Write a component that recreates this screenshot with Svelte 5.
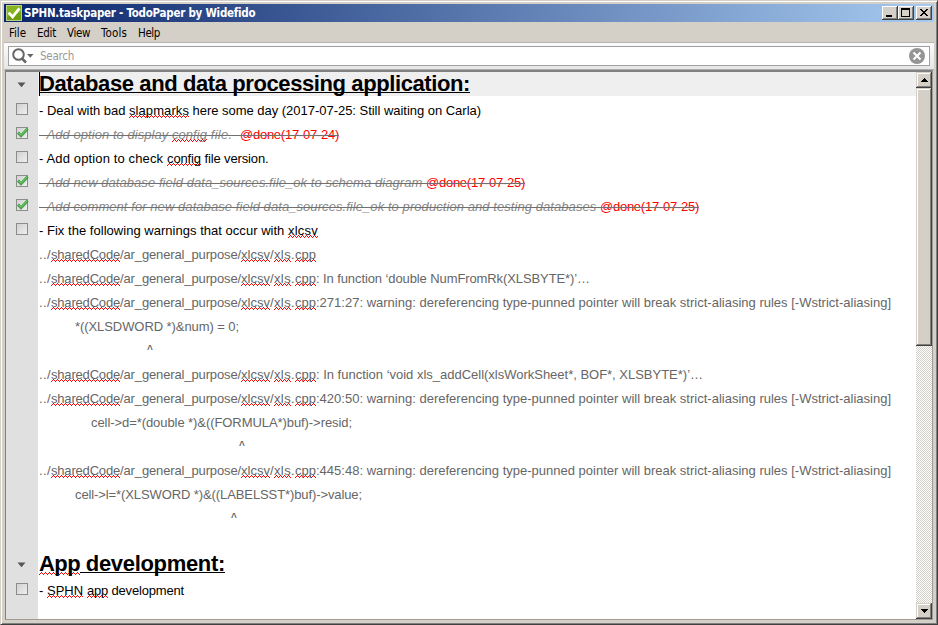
<script>
  // Spreads letter spacing so that a run of text takes exactly the given width.
  function fit(node, width) {
    const natural = node.getBoundingClientRect().width;
    const count = Array.from(node.textContent).length;
    if (width && count) node.style.letterSpacing = `${(width - natural) / count}px`;
  }

  const menus = [
    { label: 'File', width: 17, gap: 11 },
    { label: 'Edit', width: 19, gap: 11 },
    { label: 'View', width: 23, gap: 11 },
    { label: 'Tools', width: 26, gap: 11 },
    { label: 'Help', width: 22, gap: 0 },
  ];

  // "~" surrounds words flagged by the spell checker; widths has one entry per part.
  const path = '../~sharedCode~/ar_general_purpose/~xlcsv~/~xls~.~cpp~';
  const pathWidths = [12, 69, 121, 29, 4, 17, 4, 21];
  const rows = [
    { kind: 'heading', text: 'Database and data processing application:', widths: [431], active: true },
    { kind: 'task', text: '- Deal with bad ~slapmarks~ here some day (2017-07-25: Still waiting on Carla)', widths: [90, 60, 292] },
    { kind: 'task', done: true, text: '- Add option to display ~config~ file.  ', widths: [133, 35, 33], tag: '@done(17-07-24)' },
    { kind: 'task', text: '- Add option to check ~config~ file version.', widths: [128, 34, 67.5] },
    { kind: 'task', done: true, text: '- Add new database field data_sources.file_ok to schema diagram ', widths: [387], tag: '@done(17-07-25)' },
    { kind: 'task', done: true, text: '- Add comment for new database field data_sources.file_ok to production and testing databases ', widths: [561], tag: '@done(17-07-25)' },
    { kind: 'task', text: '- Fix the following warnings that occur with ~xlcsv~', widths: [249, 30] },
    { kind: 'note', text: path, widths: pathWidths },
    { kind: 'note', text: path + ': In function ‘double NumFromRk(XLSBYTE*)’…', widths: [...pathWidths, 274] },
    { kind: 'note', text: path + ':271:27: warning: dereferencing type-punned pointer will break strict-aliasing rules [-Wstrict-aliasing]', widths: [...pathWidths, 575] },
    { kind: 'note', text: '*((XLSDWORD *)&num) = 0;', widths: [164], indent: 36 },
    { kind: 'note', text: '^', indent: 108, caret: true },
    { kind: 'note', text: path + ': In function ‘void xls_addCell(xlsWorkSheet*, BOF*, XLSBYTE*)’…', widths: [...pathWidths, 387] },
    { kind: 'note', text: path + ':420:50: warning: dereferencing type-punned pointer will break strict-aliasing rules [-Wstrict-aliasing]', widths: [...pathWidths, 575] },
    { kind: 'note', text: 'cell->d=*(double *)&((FORMULA*)buf)->resid;', widths: [261], indent: 52 },
    { kind: 'note', text: '^', indent: 200, caret: true },
    { kind: 'note', text: path + ':445:48: warning: dereferencing type-punned pointer will break strict-aliasing rules [-Wstrict-aliasing]', widths: [...pathWidths, 575] },
    { kind: 'note', text: 'cell->l=*(XLSWORD *)&((LABELSST*)buf)->value;', widths: [287], indent: 36 },
    { kind: 'note', text: '^', indent: 192, caret: true },
    { kind: 'blank', text: '' },
    { kind: 'heading', text: '~App~ development:', widths: [0, 41, 145] },
    { kind: 'task', text: '- ~SPHN~ ~app~ development', widths: [8, 36, 4, 21, 76] },
  ];
  const parts = (text) => text.split('~');
</script>

<div class="window">
  <header class="titlebar">
    <svg class="logo" width="16" height="16" viewBox="0 0 16 16">
      <rect width="16" height="16" fill="#b9cf8a" />
      <rect x="1" y="1" width="14" height="14" fill="#6f9f0c" />
      <path d="M1 1h14v6L1 12z" fill="#86b420" />
      <path d="M2.6 7.6l4 4.2L13.4 3.4" fill="none" stroke="#fff" stroke-width="2.8" />
    </svg>
    <span class="caption"><span use:fit={231}>SPHN.taskpaper - TodoPaper by Widefido</span></span>
    <div class="controls">
      <button aria-label="Minimize"><svg width="14" height="12"><path d="M3 8h6v2H3z" /></svg></button>
      <button aria-label="Maximize"><svg width="14" height="12"><path fill-rule="evenodd" d="M2 1h9v9H2zM3 3v6h7V3z" /></svg></button>
      <button aria-label="Close" class="close"><svg width="14" height="12"><path d="M3 2h2v1h1v1h2V3h1V2h2v1h-1v1H9v1H8v1h1v1h1v1h1v1H9V8H8V7H6v1H5v1H3V8h1V7h1V6h1V5H5V4H4V3H3z" /></svg></button>
    </div>
  </header>

  <nav>
    {#each menus as m}
      <span class="menu" style:width="{m.width + m.gap}px"><span use:fit={m.width}>{m.label}</span></span>
    {/each}
  </nav>

  <div class="toolbar">
    <div class="search">
      <svg width="24" height="18" viewBox="0 0 24 18">
        <circle cx="8.5" cy="7.5" r="5.3" fill="none" stroke="#666" stroke-width="2" />
        <path d="M12 11.5l4 4" stroke="#666" stroke-width="2.5" />
        <path d="M17 7h6.6l-3.3 3.7z" fill="#666" />
      </svg>
      <span class="hint"><span use:fit={34}>Search</span></span>
      <svg class="clear" width="16" height="16" viewBox="0 0 16 16">
        <circle cx="8" cy="8" r="8" fill="#959595" />
        <path d="M4.5 4.5l7 7M11.5 4.5l-7 7" stroke="#fff" stroke-width="2" />
      </svg>
    </div>
  </div>

  <main>
    <div class="doc">
      {#each rows as row}
        <div class="row {row.kind}" class:active={row.active} class:done={row.done} class:caret={row.caret}>
          <div class="gutter">
            {#if row.kind === 'heading'}
              <svg width="9" height="6"><path d="M0.5 0.5h8L4.5 5.3z" fill="#555" /></svg>
            {:else if row.kind === 'task'}
              <span class="box">
                {#if row.done}
                  <svg width="12" height="11" viewBox="0 0 13 12">
                    <path d="M1 6l3.3 3.5L11.5 2" fill="none" stroke="#3c9a3c" stroke-width="3.2" />
                    <path d="M1.6 6.2l2.8 2.5L11 2" fill="none" stroke="#69c069" stroke-width="1.5" />
                  </svg>
                {/if}
              </span>
            {/if}
          </div>
          <div class="line" style:padding-left="{1 + (row.indent ?? 0)}px">
            {#if row.text}<span class="struck"><span class="text">{#each parts(row.text) as part, i}{#if part}<span class:typo={i % 2} use:fit={row.widths?.[i]}>{part}</span>{/if}{/each}</span>{#if row.tag}<span class="tag" use:fit={99}>{row.tag}</span>{/if}</span>{/if}
          </div>
        </div>
      {/each}
    </div>
    <div class="scrollbar">
      <div class="raised arrow"><svg width="7" height="4"><path d="M3 0h1v1h1v1h1v1h1v1H0V3h1V2h1V1h1z" /></svg></div>
      <div class="raised thumb"></div>
      <div class="track"></div>
      <div class="raised arrow"><svg width="7" height="4"><path d="M0 0h7v1H6v1H5v1H4v1H3V3H2V2H1V1H0z" /></svg></div>
    </div>
  </main>
</div>

<style>
  .window {
    box-sizing: border-box;
    width: 938px;
    height: 625px;
    padding: 3px 3px 4px 3px;
    display: flex;
    flex-direction: column;
    background: #d4d0c8;
    border: 1px solid #d4d0c8;
    border-right-color: #404040;
    border-bottom-color: #404040;
    box-shadow: inset 1px 1px #fff, inset -1px -1px #808080;
    font: 11.5px/14px "DejaVu Sans Condensed", "DejaVu Sans", sans-serif;
    overflow: hidden;
  }
  span { white-space: pre; }
  svg { display: block; flex: none; }
  .titlebar {
    height: 18px;
    flex: none;
    display: flex;
    align-items: center;
    padding: 0 2px;
    background: linear-gradient(90deg, #0a246a, #a6caf0);
  }
  .caption { flex: 1; margin-left: 2px; color: #fff; font-weight: bold; }
  .controls { display: flex; }
  button {
    width: 16px;
    height: 14px;
    padding: 1px;
    border: 0;
    background: #d4d0c8;
    box-shadow: inset -1px -1px #404040, inset 1px 1px #fff, inset -2px -2px #808080;
  }
  .close { margin-left: 2px; }
  nav {
    height: 20px;
    box-sizing: border-box;
    flex: none;
    display: flex;
    align-items: center;
    padding: 2px 0 0 5px;
    color: #000;
  }
  .menu { display: block; }
  .toolbar {
    height: 28px;
    box-sizing: border-box;
    flex: none;
    padding: 3px 4px;
    border-top: 1px solid #b5b5b5;
    border-bottom: 1px solid #b0b0b0;
    background: linear-gradient(#fbfbfb, #e6e6e6);
  }
  .search {
    height: 20px;
    box-sizing: border-box;
    border: 1px solid #a0a0a0;
    background: #fff;
    display: flex;
    align-items: center;
    padding: 0 4px 0 1px;
  }
  .hint { flex: 1; margin-left: 6px; color: #999; }
  main {
    flex: 1;
    min-height: 0;
    display: flex;
    margin: 0 1px 0 1px;
    border: 1px solid #808080;
    border-top-width: 2px;
    border-right-color: #a09c94;
    border-bottom-color: #a09c94;
    background: #fff;
  }
  .doc {
    flex: 1;
    min-width: 0;
    overflow: hidden;
    background: linear-gradient(90deg, #e0e0e0 32px, #fff 32px);
    font: 13px/26px "Liberation Sans", Arial, sans-serif;
    color: #000;
  }
  .row { display: flex; height: 24px; }
  .blank { height: 22px; }
  .heading { height: 24px; margin-bottom: 2px; font-size: 22px; line-height: 23px; font-weight: bold; }
  .gutter {
    width: 32px;
    height: 24px;
    box-sizing: border-box;
    padding: 0 1px 2px 0;
    flex: none;
    display: flex;
    align-items: center;
    justify-content: center;
  }
  .heading .gutter { padding: 1px 1px 0 0; }
  .line { flex: 1; min-width: 0; height: 24px; box-sizing: border-box; }
  .active .line {
    background: linear-gradient(#000, #000) 1px 0 / 1px 24px no-repeat #efefef;
  }
  .struck { position: relative; display: inline-block; height: 24px; vertical-align: top; }
  .heading .struck { background: linear-gradient(#000, #000) 0 20px / 100% 1px no-repeat; }
  .done .struck::after {
    content: '';
    position: absolute;
    left: 0;
    right: 0;
    top: 13px;
    height: 1px;
    background: #707070;
  }
  .done .text { color: #888; font-style: italic; }
  .done .tag { color: #f00; }
  .note { color: #666; }
  .caret { font-size: 10px; font-weight: bold; line-height: 24px; }
  .typo {
    --wave: url("data:image/svg+xml,%3Csvg xmlns='http://www.w3.org/2000/svg' width='4' height='3'%3E%3Cpath d='M0 2h1v1H0zM1 1h1v1H1zM2 0h1v1H2zM3 1h1v1H3z' fill='%23f00'/%3E%3C/svg%3E");
    background: var(--wave) repeat-x left bottom;
  }
  .heading .typo {
    background: var(--wave) repeat-x left bottom 1px, linear-gradient(#fff, #fff) left bottom 1px / 100% 4px no-repeat;
  }
  .box {
    width: 12px;
    height: 12px;
    box-sizing: border-box;
    border: 1px solid #8c8c8c;
    background: linear-gradient(135deg, #d2d2d2, #eee);
  }
  .box svg { margin: -1px 0 0 0; }
  .scrollbar { width: 16px; flex: none; display: flex; flex-direction: column; }
  .raised {
    flex: none;
    box-sizing: border-box;
    background: #d4d0c8;
    box-shadow: inset -1px -1px #404040, inset 1px 1px #d4d0c8, inset -2px -2px #808080, inset 2px 2px #fff;
  }
  .arrow { height: 16px; display: flex; align-items: center; justify-content: center; }
  .thumb { height: 258px; }
  .track { flex: 1; background: repeating-conic-gradient(#fff 0 25%, #d4d0c8 0 50%) 0 0 / 2px 2px; }
</style>
